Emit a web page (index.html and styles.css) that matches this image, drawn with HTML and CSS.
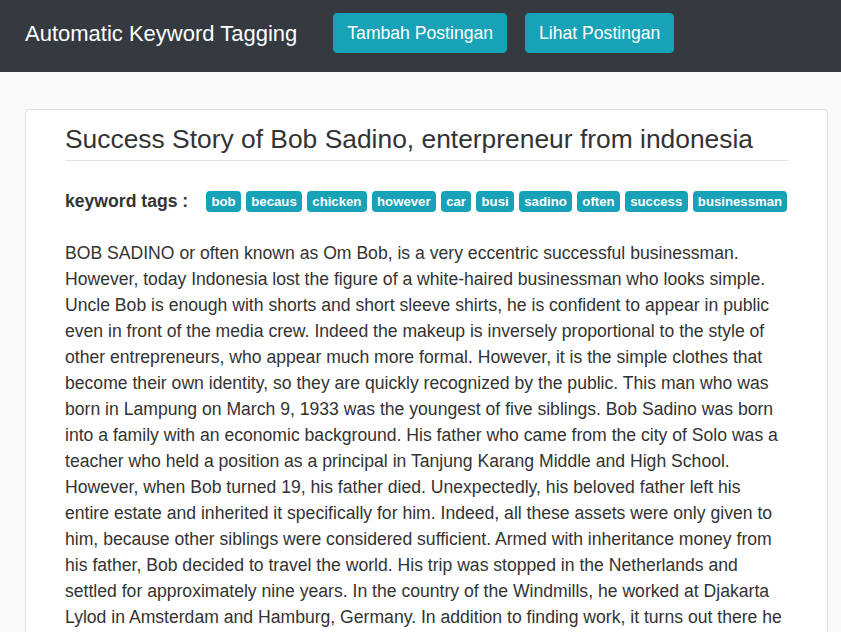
FILE: index.html
```html
<!DOCTYPE html>
<html>
<head>
<meta charset="utf-8">
<title>Automatic Keyword Tagging</title>
<link rel="stylesheet" href="styles.css">
</head>
<body>
<nav class="navbar">
  <a class="brand" href="#">Automatic Keyword Tagging</a>
  <div class="nav-buttons">
    <a class="btn" href="#">Tambah Postingan</a>
    <a class="btn" href="#">Lihat Postingan</a>
  </div>
</nav>
<main class="container">
  <article class="card">
    <h1 class="title">Success Story of Bob Sadino, enterpreneur from indonesia</h1>
    <div class="tags">
      <span class="tags-label">keyword tags :</span>
      <div class="badges">
        <span class="badge">bob</span>
        <span class="badge">becaus</span>
        <span class="badge">chicken</span>
        <span class="badge">however</span>
        <span class="badge">car</span>
        <span class="badge">busi</span>
        <span class="badge">sadino</span>
        <span class="badge">often</span>
        <span class="badge">success</span>
        <span class="badge">businessman</span>
      </div>
    </div>
    <p class="content">BOB SADINO or often known as Om Bob, is a very eccentric successful businessman. However, today Indonesia lost the figure of a white-haired businessman who looks simple. Uncle Bob is enough with shorts and short sleeve shirts, he is confident to appear in public even in front of the media crew. Indeed the makeup is inversely proportional to the style of other entrepreneurs, who appear much more formal. However, it is the simple clothes that become their own identity, so they are quickly recognized by the public. This man who was born in Lampung on March 9, 1933 was the youngest of five siblings. Bob Sadino was born into a family with an economic background. His father who came from the city of Solo was a teacher who held a position as a principal in Tanjung Karang Middle and High School. However, when Bob turned 19, his father died. Unexpectedly, his beloved father left his entire estate and inherited it specifically for him. Indeed, all these assets were only given to him, because other siblings were considered sufficient. Armed with inheritance money from his father, Bob decided to travel the world. His trip was stopped in the Netherlands and settled for approximately nine years. In the country of the Windmills, he worked at Djakarta Lylod in Amsterdam and Hamburg, Germany. In addition to finding work, it turns out there he met his future wife and they later returned to Indonesia together to start a new life.</p>
  </article>
</main>
</body>
</html>
```
FILE: styles.css
```css
* { box-sizing: border-box; }
html, body { margin: 0; padding: 0; }
body {
  background: #f9f9f9;
  font-family: "Liberation Sans", Arial, sans-serif;
  color: #333333;
  font-size: 17.6px;
  line-height: 1.5;
}
.navbar {
  background: #343a40;
  height: 72px;
  display: flex;
  align-items: center;
  padding: 0 25px 6px 25px;
}
.brand {
  color: #ffffff;
  font-size: 22px;
  text-decoration: none;
  line-height: 1.5;
  margin-right: 36px;
  margin-top: 1px;
}
.nav-buttons {
  display: flex;
  gap: 18px;
}
.btn {
  display: inline-block;
  background: #17a2b8;
  border: 1px solid #17a2b8;
  color: #ffffff;
  text-decoration: none;
  font-size: 17.6px;
  line-height: 26px;
  padding: 6px 13px;
  border-radius: 4px;
}
.container {
  margin: 37px 13px 0 25px;
}
.card {
  background: #ffffff;
  border: 1px solid #dfdfdf;
  border-radius: 4px;
  padding: 14px 39px 20px 39px;
}
.title {
  font-size: 26.4px;
  font-weight: normal;
  line-height: 31.7px;
  margin: 0;
  padding-bottom: 4px;
  border-bottom: 1px solid #e3e3e3;
  white-space: nowrap;
}
.tags {
  display: flex;
  align-items: center;
  margin-top: 27px;
}
.tags-label {
  font-weight: bold;
  margin-right: 18px;
  white-space: nowrap;
  flex-shrink: 0;
}
.badges {
  display: flex;
  flex-wrap: wrap;
  gap: 5px;
  margin-top: 1px;
}
.badge {
  background: #17a2b8;
  color: #ffffff;
  font-weight: bold;
  font-size: 13.2px;
  line-height: 1;
  padding: 3.5px 5.3px;
  border-radius: 4px;
}
.content {
  margin: 26px 0 0 0;
  line-height: 26px;
}
```
